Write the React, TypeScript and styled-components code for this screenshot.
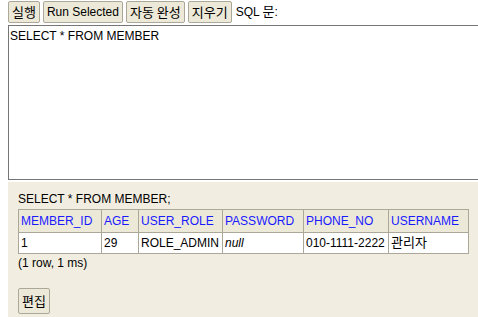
import React from "react";
import styled, { createGlobalStyle } from "styled-components";

const GlobalStyle = createGlobalStyle`
  html, body {
    margin: 0;
    padding: 0;
    background: #ffffff;
    font-family: "Liberation Sans", "Noto Sans CJK KR", Arial, sans-serif;
    font-size: 12px;
    color: #000;
    overflow: hidden;
  }
`;

const Page = styled.div`
  display: flex;
  flex-direction: column;
  height: 317px;
  padding-left: 8px;
  overflow: hidden;
`;

const Toolbar = styled.div`
  display: flex;
  align-items: flex-start;
  gap: 3px;
  height: 25px;
  padding-top: 1px;
  box-sizing: border-box;
`;

const Button = styled.button<{ $tall?: boolean }>`
  height: ${(p) => (p.$tall ? 26 : 22)}px;
  padding: 0 3px;
  margin: 0;
  border: 1px solid #aca899;
  border-radius: 2px;
  background: #ece9d8;
  color: #000;
  font-family: "Liberation Sans", "Noto Sans CJK KR", Arial, sans-serif;
  font-size: 12px;
  line-height: 14px;
  white-space: nowrap;
  cursor: pointer;
`;

const Ko = styled.span`
  font-family: "Noto Sans CJK KR", sans-serif;
  font-size: 13px;
  line-height: 14px;
`;

const Label = styled.span`
  line-height: 22px;
  margin-left: 1px;
  white-space: nowrap;
`;

const Editor = styled.textarea`
  display: block;
  box-sizing: border-box;
  width: 500px;
  height: 155px;
  margin: 0;
  padding: 3px 1px;
  border: 1px solid #767676;
  font-family: "Liberation Sans", "Noto Sans CJK KR", Arial, sans-serif;
  font-size: 12px;
  line-height: 14px;
  color: #000;
  resize: none;
  outline: none;
  flex-shrink: 0;
`;

const ResultPanel = styled.div`
  flex: 1;
  margin-top: 2px;
  padding: 10px 0 0 10px;
  background: #f1eee1;
  line-height: 14px;
`;

const Statement = styled.div`
  line-height: 14px;
`;

const Table = styled.table`
  margin-top: 3px;
  border-collapse: collapse;
  table-layout: fixed;
  width: 450px;
`;

const Th = styled.th`
  padding: 4px 2px;
  border: 1px solid #aca899;
  background: #ece9d8;
  color: #1a1aff;
  font-weight: normal;
  text-align: left;
  line-height: 14px;
  white-space: nowrap;
  overflow: hidden;
`;

const Td = styled.td<{ $italic?: boolean }>`
  padding: 2px 2px 3px;
  border: 1px solid #aca899;
  background: #ffffff;
  line-height: 14px;
  white-space: nowrap;
  overflow: hidden;
  font-style: ${(p) => (p.$italic ? "italic" : "normal")};
`;

const Summary = styled.div`
  margin-top: 2px;
  line-height: 14px;
`;

const EditRow = styled.div`
  margin-top: 18px;
`;

const columns = [
  { name: "MEMBER_ID", width: 83 },
  { name: "AGE", width: 37 },
  { name: "USER_ROLE", width: 84 },
  { name: "PASSWORD", width: 81 },
  { name: "PHONE_NO", width: 85 },
  { name: "USERNAME", width: 80 },
];

const row: { value: string; italic?: boolean; korean?: boolean }[] = [
  { value: "1" },
  { value: "29" },
  { value: "ROLE_ADMIN" },
  { value: "null", italic: true },
  { value: "010-1111-2222" },
  { value: "관리자", korean: true },
];

export default function App() {
  return (
    <>
      <GlobalStyle />
      <Page>
        <Toolbar>
          <Button>
            <Ko>실행</Ko>
          </Button>
          <Button>Run Selected</Button>
          <Button>
            <Ko>자동 완성</Ko>
          </Button>
          <Button>
            <Ko>지우기</Ko>
          </Button>
          <Label>
            SQL <Ko>문</Ko>:
          </Label>
        </Toolbar>
        <Editor defaultValue="SELECT * FROM MEMBER" spellCheck={false} />
        <ResultPanel>
          <Statement>SELECT * FROM MEMBER;</Statement>
          <Table>
            <colgroup>
              {columns.map((c) => (
                <col key={c.name} width={c.width} />
              ))}
            </colgroup>
            <thead>
              <tr>
                {columns.map((c) => (
                  <Th key={c.name}>{c.name}</Th>
                ))}
              </tr>
            </thead>
            <tbody>
              <tr>
                {row.map((c, i) => (
                  <Td key={i} $italic={c.italic}>
                    {c.korean ? <Ko>{c.value}</Ko> : c.value}
                  </Td>
                ))}
              </tr>
            </tbody>
          </Table>
          <Summary>(1 row, 1 ms)</Summary>
          <EditRow>
            <Button $tall>
              <Ko>편집</Ko>
            </Button>
          </EditRow>
        </ResultPanel>
      </Page>
    </>
  );
}
